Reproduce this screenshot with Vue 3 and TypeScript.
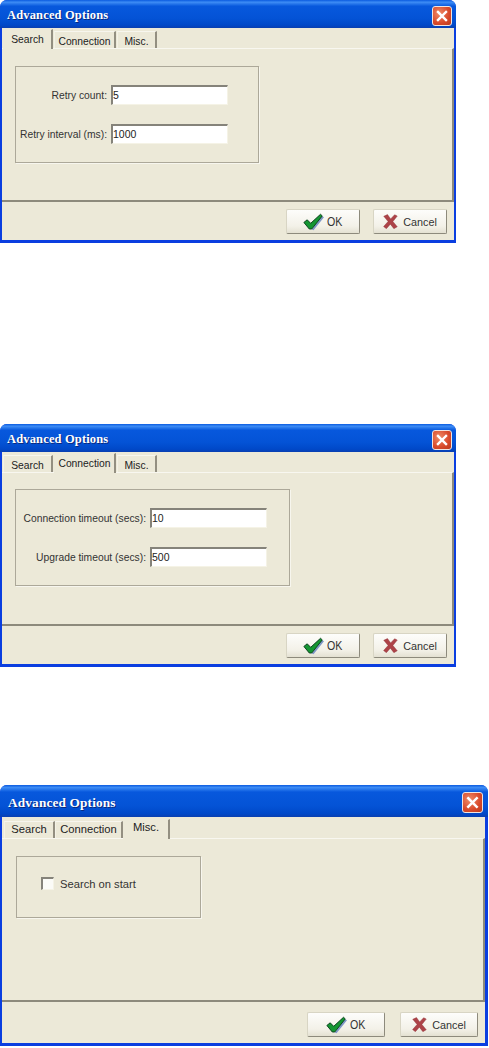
<script setup lang="ts">
interface Field { label: string; value: string }
interface Dialog { id: string; active: string; fields: Field[]; check?: string }

const tabs = ['Search', 'Connection', 'Misc.']
const dialogs: Dialog[] = [
  { id: 'd1', active: 'Search', fields: [
    { label: 'Retry count:', value: '5' },
    { label: 'Retry interval (ms):', value: '1000' },
  ] },
  { id: 'd2', active: 'Connection', fields: [
    { label: 'Connection timeout (secs):', value: '10' },
    { label: 'Upgrade timeout (secs):', value: '500' },
  ] },
  { id: 'd3', active: 'Misc.', fields: [], check: 'Search on start' },
]
</script>

<template>
  <div class="page">
    <section v-for="d in dialogs" :key="d.id" class="dialog" :class="d.id">
      <header class="titlebar">
        <span class="title">Advanced Options</span>
        <span class="close">
          <svg viewBox="0 0 20 20" class="close-x"><path d="M5.5 5.5 L14.5 14.5 M14.5 5.5 L5.5 14.5" stroke="#fff" stroke-width="2.6" stroke-linecap="square" fill="none" /></svg>
        </span>
      </header>
      <div class="body">
        <div class="tabs">
          <span v-for="t in tabs" :key="t" class="tab" :class="[`tab-${t.charAt(0).toLowerCase()}`, { active: t === d.active }]">{{ t }}</span>
        </div>
        <div class="panel">
          <div class="group">
            <div v-if="d.fields.length" class="form">
              <template v-for="f in d.fields" :key="f.label">
                <label class="label">{{ f.label }}</label>
                <div class="input">{{ f.value }}</div>
              </template>
            </div>
            <div v-else class="checkrow">
              <span class="checkbox"></span>
              <span class="label">{{ d.check }}</span>
            </div>
          </div>
        </div>
        <footer class="footer">
          <button class="btn">
            <svg viewBox="0 0 24 20" class="ico-ok">
              <path d="M10 18.5 L21.5 3 L24 4.5 L12 19.5 Z" fill="#7f97c6" />
              <path d="M1 10.5 L4.8 7.5 L8.8 11.5 L20 1.2 L22 3 L10 18 L7.2 18 Z" fill="#149632" stroke="#0a3f1c" stroke-width="1.1" stroke-linejoin="round" />
            </svg>
            <span class="ok-text">OK</span>
          </button>
          <button class="btn">
            <svg viewBox="0 0 20 20" class="ico-x">
              <path d="M1 3 L6 .8 L10.2 6.5 L15.5 1 L19 2.8 L13.2 10 L19 17 L14.5 19.5 L9.8 13.5 L4.5 19.5 L.8 16.8 L6.8 10 Z" fill="#ad4348" stroke="#93393f" stroke-width=".6" />
            </svg>
            <span>Cancel</span>
          </button>
        </footer>
      </div>
    </section>
  </div>
</template>

<style>
html, body { margin: 0; background: #fff; }
</style>

<style scoped>
.page {
  width: 489px;
  height: 1048px;
  overflow: hidden;
  display: flex;
  flex-direction: column;
  align-items: flex-start;
  font-family: "Liberation Sans", Arial, sans-serif;
  color: #222;
}
.dialog {
  display: flex;
  flex-direction: column;
  box-sizing: border-box;
  background: #0a3ee0;
  border-radius: 7px 7px 0 0;
  padding: 0 2px 3px 2px;
  font-size: 10.3px;
}
.d1 { width: 456px; height: 243px; }
.d2 { width: 456px; height: 243px; margin-top: 181px; }
.d3 { width: 488px; height: 261px; margin-top: 118px; font-size: 11.2px; padding-right: 3px; }

.titlebar {
  display: flex;
  align-items: center;
  justify-content: space-between;
  height: 28px;
  flex: none;
  box-sizing: border-box;
  margin: 0 -2px;
  padding: 3px 4px 0 7px;
  border-radius: 7px 7px 0 0;
  background: linear-gradient(#0a5be0 0, #3d8cf5 8%, #0758dd 22%, #0453d6 65%, #0048c8 90%, #0a3fb0 100%);
}
.d3 .titlebar { height: 32px; padding: 3px 5px 0 8px; margin-right: -3px; }
.title {
  font-family: "Liberation Serif", serif;
  font-weight: 700;
  font-size: 12.5px;
  color: #fff;
  text-shadow: 1px 1px 0 #0a2a80;
  letter-spacing: .15px;
}
.d3 .title { font-size: 13.3px; }
.close {
  width: 20px;
  height: 20px;
  box-sizing: border-box;
  border: 1px solid #f0e4e0;
  border-radius: 3px;
  background: radial-gradient(circle at 35% 35%, #ef8b68, #d8492a 60%, #b83a1e);
  display: flex;
}
.d3 .close { width: 21px; height: 21px; }
.close-x { width: 100%; height: 100%; }

.body {
  flex: 1;
  display: flex;
  flex-direction: column;
  background: #ece9d8;
  min-height: 0;
}

.tabs {
  height: 20px;
  flex: none;
  display: flex;
  align-items: flex-end;
  box-sizing: border-box;
  padding-left: 1px;
  background: #ece9d8;
}
.d3 .tabs { height: 21px; padding-left: 2px; }
.tab {
  box-sizing: border-box;
  height: 17px;
  line-height: 19px;
  text-align: center;
  border-right: 2px solid #938f81;
  border-top: 1px solid #f7f6ee;
  border-left: 1px solid #f4f2e6;
  background: #ece9d8;
  position: relative;
}
.d3 .tab { line-height: 15px; }
.tab-s { width: 50px; }
.tab-c { width: 62px; margin-left: 1px; }
.tab-m { width: 40px; margin-left: 1px; }
.d3 .tab-s { width: 51px; }
.d3 .tab-c { width: 68px; margin-left: 0; }
.d3 .tab-m { width: 47px; margin-left: 0; }
.tab.active {
  height: 20px;
  line-height: 20px;
  margin-bottom: -1px;
  z-index: 1;
  border-left-color: #ece9d8;
  border-top-color: #ece9d8;
}
.d3 .tab.active { line-height: 15px; }

.panel {
  flex: 1;
  min-height: 0;
  box-sizing: border-box;
  padding: 17px 0 0 13px;
  border-top: 1px solid #f8f7f0;
  border-right: 2px solid #8d8a7c;
  border-bottom: 2px solid #8d8a7c;
}
.d2 .panel { padding-top: 16px; }
.d3 .panel { padding: 17px 0 0 14px; }

.group {
  box-sizing: border-box;
  border: 1px solid #aca899;
  box-shadow: 1px 1px 0 #f7f6ee;
}
.d1 .group { width: 244px; height: 97px; }
.d2 .group { width: 275px; height: 97px; }
.d3 .group { width: 185px; height: 62px; }

.form {
  display: grid;
  grid-template-columns: 1fr 117px;
  column-gap: 4px;
  row-gap: 19px;
  padding-top: 18px;
  align-items: center;
}
.d1 .form { padding-right: 30px; }
.d2 .form { padding-right: 22px; }
.label {
  text-align: right;
  white-space: nowrap;
  color: #333;
}
.input {
  box-sizing: border-box;
  height: 20px;
  line-height: 17px;
  background: #fff;
  border-top: 2px solid #85837a;
  border-left: 2px solid #85837a;
  border-right: 1px solid #f5f3e6;
  border-bottom: 1px solid #f5f3e6;
  font-size: 10.5px;
  color: #222;
}

.checkrow {
  display: flex;
  align-items: center;
  gap: 6px;
  padding: 20px 0 0 24px;
}
.checkbox {
  width: 13px;
  height: 13px;
  box-sizing: border-box;
  background: #fbfbf7;
  border-top: 2px solid #85837a;
  border-left: 2px solid #85837a;
  border-right: 1px solid #f5f3e6;
  border-bottom: 1px solid #f5f3e6;
}

.footer {
  flex: none;
  height: 38px;
  box-sizing: border-box;
  display: flex;
  justify-content: flex-end;
  gap: 13px;
  padding: 7px 7px 0 0;
}
.d3 .footer { height: 41px; padding: 10px 7px 0 0; gap: 15px; }
.btn {
  box-sizing: border-box;
  width: 74px;
  height: 25px;
  display: flex;
  align-items: center;
  justify-content: center;
  gap: 3px;
  padding: 0;
  font: inherit;
  font-size: 10.8px;
  color: #333;
  background: linear-gradient(#fdfdfb, #f3f1e8 70%, #e4e1d2);
  border: 1px solid #d8d5c4;
  border-right-color: #8d8a7c;
  border-bottom-color: #8d8a7c;
  border-radius: 2px;
}
.d3 .btn { width: 78px; }
.ok-text {
  display: inline-block;
  font-size: 12.5px;
  transform: scaleX(.85);
  transform-origin: left center;
  margin-right: -2px;
}
.ico-ok { width: 21px; height: 18px; }
.ico-x { width: 15px; height: 15px; margin-right: 2px; }
</style>
